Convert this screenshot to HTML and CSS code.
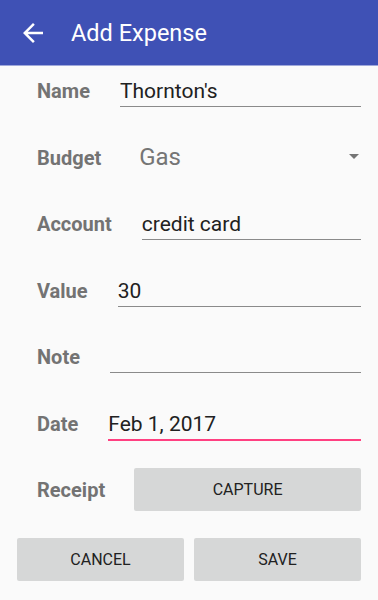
FILE: index.html
```html
<!DOCTYPE html>
<html lang="en">
<head>
    <meta charset="UTF-8">
    <meta name="viewport" content="width=device-width, initial-scale=1.0">
    <title>Add Expense</title>
    <link rel="stylesheet" href="styles.css">
</head>
<body>
    <!-- Toolbar -->
    <header class="app-bar">
        <svg class="back-icon" viewBox="0 0 24 24" width="30" height="30">
            <path d="M20 11H7.83l5.59-5.59L12 4l-8 8 8 8 1.41-1.41L7.83 13H20v-2z" fill="#fff"/>
        </svg>
        <h1 class="title">Add Expense</h1>
    </header>

    <div class="form">
        <div class="row">
            <span class="label">Name</span>
            <div class="field">Thornton's</div>
        </div>
        <div class="row">
            <span class="label">Budget</span>
            <div class="spinner">
                <span class="spinner-text">Gas</span>
                <span class="caret"></span>
            </div>
        </div>
        <div class="row">
            <span class="label">Account</span>
            <div class="field">credit card</div>
        </div>
        <div class="row">
            <span class="label">Value</span>
            <div class="field">30</div>
        </div>
        <div class="row">
            <span class="label">Note</span>
            <div class="field">&nbsp;</div>
        </div>
        <div class="row">
            <span class="label">Date</span>
            <div class="field focused">Feb 1, 2017</div>
        </div>
        <div class="row receipt-row">
            <span class="label">Receipt</span>
            <button class="btn wide">CAPTURE</button>
        </div>
        <div class="actions">
            <button class="btn">CANCEL</button>
            <button class="btn">SAVE</button>
        </div>
    </div>
</body>
</html>
```

FILE: styles.css
```css
body, html {
    margin: 0;
    padding: 0;
    background: #fafafa;
    font-family: Roboto, "Noto Sans", sans-serif;
}

.app-bar {
    height: 65px;
    background: #3f51b5;
    display: flex;
    align-items: center;
    box-shadow: 0 1px 0 #9fa8da;
}

.back-icon {
    margin-left: 18px;
    margin-top: 1px;
}

.title {
    margin: 0 0 0 23px;
    color: #fff;
    font-size: 23.5px;
    font-weight: 400;
    padding-top: 1px;
}

.form {
    padding: 14px 17px 0 17px;
}

.row {
    display: flex;
    align-items: baseline;
    margin-bottom: 38.5px;
}

.label {
    margin-left: 20px;
    margin-right: 30px;
    color: #737373;
    font-size: 20px;
    font-weight: bold;
}

.field {
    flex: 1;
    height: 24px;
    font-size: 21px;
    line-height: 24px;
    color: #212121;
    padding-bottom: 3px;
    border-bottom: 1px solid #8a8a8a;
}

.field.focused {
    border-bottom: 2px solid #ff4081;
    margin-bottom: -1px;
}

.spinner {
    flex: 1;
    display: flex;
    align-items: flex-start;
    justify-content: space-between;
    height: 28px;
    padding-left: 8px;
}

.spinner-text {
    font-size: 24px;
    line-height: 22px;
    color: #757575;
}

.caret {
    align-self: center;
    width: 0;
    height: 0;
    border-left: 5.5px solid transparent;
    border-right: 5.5px solid transparent;
    border-top: 5.5px solid #757575;
    margin-right: 2px;
    margin-bottom: 6px;
}

.receipt-row {
    align-items: center;
    margin-top: -10px;
    margin-bottom: 27px;
}

.receipt-row .label {
    margin-right: 29px;
}

.btn {
    height: 43px;
    background: #d6d7d7;
    border: none;
    border-radius: 2px;
    color: #212121;
    font-family: Roboto, sans-serif;
    font-size: 16px;
    font-weight: 400;
    padding: 0;
}

.btn.wide {
    flex: 1;
}

.actions {
    display: grid;
    grid-template-columns: 1fr 1fr;
    gap: 10px;
}
```
